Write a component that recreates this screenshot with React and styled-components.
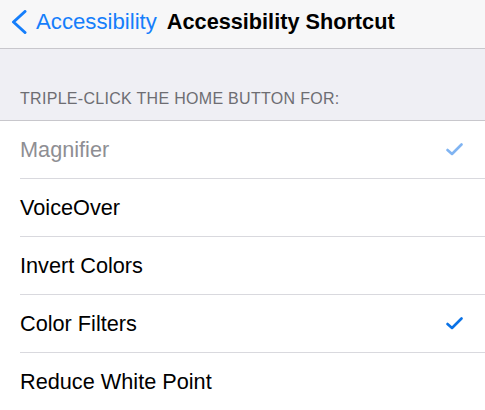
import styled, { createGlobalStyle } from "styled-components";

const GlobalStyle = createGlobalStyle`
  html, body {
    margin: 0;
    padding: 0;
    background: #efeff4;
    font-family: "Liberation Sans", Arial, sans-serif;
  }
`;

const Screen = styled.div`
  width: 485px;
  height: 410px;
  overflow: hidden;
  background: #efeff4;
`;

const NavBar = styled.div`
  height: 49px;
  box-sizing: border-box;
  padding: 0 0 4px 11px;
  display: flex;
  align-items: center;
  background: #f7f7f8;
  border-bottom: 1px solid #c8c7cc;
`;

const BackButton = styled.button`
  display: flex;
  align-items: center;
  gap: 9px;
  padding: 0;
  border: none;
  background: none;
  color: #157efb;
  font-family: inherit;
  font-size: 22.2px;
  cursor: pointer;
`;

const Title = styled.h1`
  margin: 0 0 0 10px;
  font-size: 21.7px;
  font-weight: bold;
  color: #000;
`;

const SectionHeader = styled.div`
  height: 72px;
  box-sizing: border-box;
  padding: 0 20px 12px;
  display: flex;
  align-items: flex-end;
  color: #6d6d72;
  font-size: 16px;
  letter-spacing: 0.3px;
  border-bottom: 1px solid #c8c7cc;
`;

const List = styled.ul`
  list-style: none;
  margin: 0;
  padding: 0 0 0 20px;
  background: #fff;
`;

const Row = styled.li`
  height: 58px;
  box-sizing: border-box;
  padding-right: 22px;
  display: flex;
  align-items: center;
  justify-content: space-between;
  font-size: 21.7px;
  color: ${(p) => (p.$dim ? "#8e8e93" : "#000")};
  border-bottom: ${(p) => (p.$last ? "none" : "1px solid #d9d9de")};
`;

const Check = ({ dim }) => (
  <svg width="17" height="13" viewBox="0 0 17 13">
    <polyline
      points="1.5,7 6,11 15.5,1.5"
      fill="none"
      stroke={dim ? "#80b4f2" : "#0a72e6"}
      strokeWidth="2.6"
      strokeLinecap="round"
      strokeLinejoin="round"
    />
  </svg>
);

const items = [
  { label: "Magnifier", checked: true, dim: true },
  { label: "VoiceOver" },
  { label: "Invert Colors" },
  { label: "Color Filters", checked: true },
  { label: "Reduce White Point" },
];

const App = () => {
  return (
    <Screen>
      <GlobalStyle />
      <NavBar>
        <BackButton>
          <svg width="16" height="24" viewBox="0 0 16 24">
            <polyline
              points="14,1.5 2.5,12 14,22.5"
              fill="none"
              stroke="#157efb"
              strokeWidth="3"
              strokeLinecap="round"
              strokeLinejoin="round"
            />
          </svg>
          Accessibility
        </BackButton>
        <Title>Accessibility Shortcut</Title>
      </NavBar>
      <SectionHeader>TRIPLE-CLICK THE HOME BUTTON FOR:</SectionHeader>
      <List>
        {items.map((item, i) => (
          <Row key={item.label} $dim={item.dim} $last={i === items.length - 1}>
            {item.label}
            {item.checked && <Check dim={item.dim} />}
          </Row>
        ))}
      </List>
    </Screen>
  );
};

export default App;
